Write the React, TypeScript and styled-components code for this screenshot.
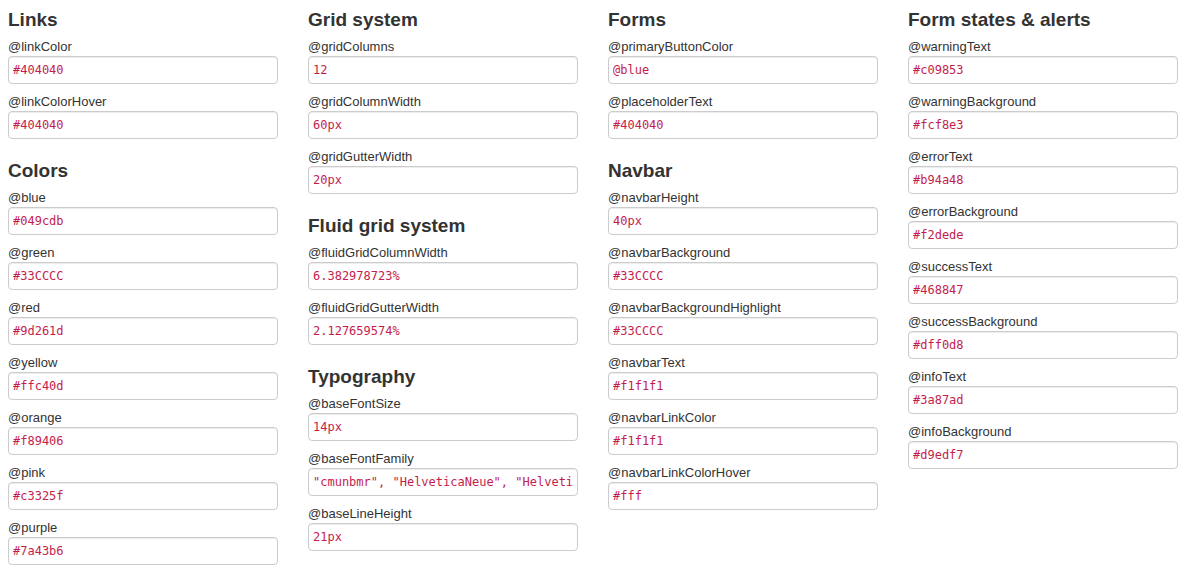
import React from "react";
import styled, { createGlobalStyle } from "styled-components";

const Global = createGlobalStyle`
  html, body { margin: 0; padding: 0; background: #fff; }
  body { font-family: "Liberation Sans", Arial, Helvetica, sans-serif; color: #333; }
`;

const Page = styled.div`
  display: grid;
  grid-template-columns: repeat(4, 270px);
  column-gap: 30px;
  padding: 9px 8px 0;
  align-items: start;
`;

const Column = styled.div`
  display: flex;
  flex-direction: column;
`;

const Section = styled.section`
  display: flex;
  flex-direction: column;
  & + & { margin-top: 13px; }
`;

const Heading = styled.h3`
  margin: 0 0 6px;
  font-size: 19px;
  line-height: 22px;
  font-weight: bold;
  color: #333;
`;

const Field = styled.label`
  display: flex;
  flex-direction: column;
  margin-bottom: 8px;
`;

const Label = styled.span`
  font-size: 13px;
  line-height: 19px;
  color: #333;
`;

const Input = styled.input`
  box-sizing: border-box;
  width: 270px;
  height: 28px;
  margin: 0;
  padding: 4px 4px;
  border: 1px solid #cccccc;
  border-radius: 4px;
  background: #fff;
  box-shadow: inset 0 1px 1px rgba(0, 0, 0, 0.075);
  font-family: "DejaVu Sans Mono", Menlo, Monaco, monospace;
  font-size: 12px;
  line-height: 18px;
  color: #c41d4d;
  outline: none;
`;

type Item = [string, string];
type Group = { title: string; items: Item[] };

const columns: Group[][] = [
  [
    { title: "Links", items: [["@linkColor", "#404040"], ["@linkColorHover", "#404040"]] },
    {
      title: "Colors",
      items: [
        ["@blue", "#049cdb"],
        ["@green", "#33CCCC"],
        ["@red", "#9d261d"],
        ["@yellow", "#ffc40d"],
        ["@orange", "#f89406"],
        ["@pink", "#c3325f"],
        ["@purple", "#7a43b6"],
      ],
    },
  ],
  [
    {
      title: "Grid system",
      items: [["@gridColumns", "12"], ["@gridColumnWidth", "60px"], ["@gridGutterWidth", "20px"]],
    },
    {
      title: "Fluid grid system",
      items: [["@fluidGridColumnWidth", "6.382978723%"], ["@fluidGridGutterWidth", "2.127659574%"]],
    },
    {
      title: "Typography",
      items: [
        ["@baseFontSize", "14px"],
        ["@baseFontFamily", "\"cmunbmr\", \"HelveticaNeue\", \"Helvetica Neue\", Helvetica, Arial, sans-serif"],
        ["@baseLineHeight", "21px"],
      ],
    },
  ],
  [
    { title: "Forms", items: [["@primaryButtonColor", "@blue"], ["@placeholderText", "#404040"]] },
    {
      title: "Navbar",
      items: [
        ["@navbarHeight", "40px"],
        ["@navbarBackground", "#33CCCC"],
        ["@navbarBackgroundHighlight", "#33CCCC"],
        ["@navbarText", "#f1f1f1"],
        ["@navbarLinkColor", "#f1f1f1"],
        ["@navbarLinkColorHover", "#fff"],
      ],
    },
  ],
  [
    {
      title: "Form states & alerts",
      items: [
        ["@warningText", "#c09853"],
        ["@warningBackground", "#fcf8e3"],
        ["@errorText", "#b94a48"],
        ["@errorBackground", "#f2dede"],
        ["@successText", "#468847"],
        ["@successBackground", "#dff0d8"],
        ["@infoText", "#3a87ad"],
        ["@infoBackground", "#d9edf7"],
      ],
    },
  ],
];

export default function App() {
  return (
    <>
      <Global />
      <Page>
        {columns.map((col, ci) => (
          <Column key={ci}>
            {col.map((g) => (
              <Section key={g.title}>
                <Heading>{g.title}</Heading>
                {g.items.map(([name, value]) => (
                  <Field key={name}>
                    <Label>{name}</Label>
                    <Input type="text" defaultValue={value} readOnly spellCheck={false} />
                  </Field>
                ))}
              </Section>
            ))}
          </Column>
        ))}
      </Page>
    </>
  );
}
